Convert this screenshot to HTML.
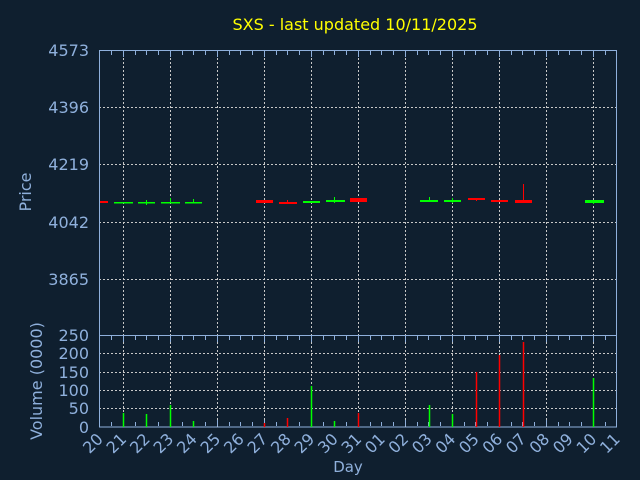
<!DOCTYPE html>
<html><head><meta charset="utf-8"><style>
html,body{margin:0;padding:0;background:#0f1f2f;}
svg{display:block;font-family:"DejaVu Sans","Liberation Sans",sans-serif;}
</style></head><body>
<svg width="640" height="480" xmlns="http://www.w3.org/2000/svg">
<rect width="640" height="480" fill="#0f1f2f"/>
<text x="355" y="30" fill="#ffff00" font-size="16" text-anchor="middle">SXS - last updated 10/11/2025</text>
<g stroke="#c8c8c8" stroke-width="1" stroke-dasharray="2,2">
<line x1="123.5" y1="50" x2="123.5" y2="427"/><line x1="170.5" y1="50" x2="170.5" y2="427"/>
<line x1="217.5" y1="50" x2="217.5" y2="427"/><line x1="264.5" y1="50" x2="264.5" y2="427"/>
<line x1="311.5" y1="50" x2="311.5" y2="427"/><line x1="358.5" y1="50" x2="358.5" y2="427"/>
<line x1="405.5" y1="50" x2="405.5" y2="427"/><line x1="452.5" y1="50" x2="452.5" y2="427"/>
<line x1="499.5" y1="50" x2="499.5" y2="427"/><line x1="546.5" y1="50" x2="546.5" y2="427"/>
<line x1="593.5" y1="50" x2="593.5" y2="427"/>
<line x1="99" y1="107.5" x2="617" y2="107.5"/><line x1="99" y1="164.5" x2="617" y2="164.5"/>
<line x1="99" y1="222.5" x2="617" y2="222.5"/><line x1="99" y1="279.5" x2="617" y2="279.5"/>
<line x1="99" y1="353.5" x2="617" y2="353.5"/><line x1="99" y1="372.5" x2="617" y2="372.5"/>
<line x1="99" y1="390.5" x2="617" y2="390.5"/><line x1="99" y1="408.5" x2="617" y2="408.5"/>
</g>
<g stroke="#8fb0dc" stroke-width="1" fill="none">
<rect x="99.5" y="50.5" width="517" height="376.5"/>
<line x1="99" y1="335.5" x2="617" y2="335.5"/>
<path id="tk" d="M111.5 51v4M123.5 51v6M135.5 51v4M146.5 51v4M158.5 51v4M170.5 51v6M182.5 51v4M193.5 51v4M205.5 51v4M217.5 51v6M229.5 51v4M240.5 51v4M252.5 51v4M264.5 51v6M276.5 51v4M287.5 51v4M299.5 51v4M311.5 51v6M323.5 51v4M334.5 51v4M346.5 51v4M358.5 51v6M370.5 51v4M381.5 51v4M393.5 51v4M405.5 51v6M417.5 51v4M428.5 51v4M440.5 51v4M452.5 51v6M464.5 51v4M475.5 51v4M487.5 51v4M499.5 51v6M511.5 51v4M522.5 51v4M534.5 51v4M546.5 51v6M558.5 51v4M569.5 51v4M581.5 51v4M593.5 51v6M605.5 51v4"/>
<use href="#tk" y="285"/>
<use href="#tk" transform="translate(0,477) scale(1,-1)"/>
</g>
<g fill="#8fb0dc" font-size="16" text-anchor="end">
<text x="89" y="56">4573</text><text x="89" y="113">4396</text><text x="89" y="170">4219</text>
<text x="89" y="228">4042</text><text x="89" y="285">3865</text>
<text x="89" y="341">250</text><text x="89" y="359">200</text><text x="89" y="378">150</text>
<text x="89" y="396">100</text><text x="89" y="414">50</text><text x="89" y="433">0</text>
</g>
<text transform="translate(31,192) rotate(-90)" fill="#8fb0dc" font-size="16" text-anchor="middle">Price</text>
<text transform="translate(42,381) rotate(-90)" fill="#8fb0dc" font-size="16" text-anchor="middle">Volume (0000)</text>
<text x="348" y="472" fill="#8fb0dc" font-size="15" text-anchor="middle">Day</text>
<g fill="#8fb0dc" font-size="16" text-anchor="end">
<text transform="translate(104,440) rotate(-45)">20</text>
<text transform="translate(127.5,440) rotate(-45)">21</text>
<text transform="translate(151,440) rotate(-45)">22</text>
<text transform="translate(174.5,440) rotate(-45)">23</text>
<text transform="translate(198,440) rotate(-45)">24</text>
<text transform="translate(221.5,440) rotate(-45)">25</text>
<text transform="translate(245,440) rotate(-45)">26</text>
<text transform="translate(268.5,440) rotate(-45)">27</text>
<text transform="translate(292,440) rotate(-45)">28</text>
<text transform="translate(315.5,440) rotate(-45)">29</text>
<text transform="translate(339,440) rotate(-45)">30</text>
<text transform="translate(362.5,440) rotate(-45)">31</text>
<text transform="translate(386,440) rotate(-45)">01</text>
<text transform="translate(409.5,440) rotate(-45)">02</text>
<text transform="translate(433,440) rotate(-45)">03</text>
<text transform="translate(456.5,440) rotate(-45)">04</text>
<text transform="translate(480,440) rotate(-45)">05</text>
<text transform="translate(503.5,440) rotate(-45)">06</text>
<text transform="translate(527,440) rotate(-45)">07</text>
<text transform="translate(550.5,440) rotate(-45)">08</text>
<text transform="translate(574,440) rotate(-45)">09</text>
<text transform="translate(597.5,440) rotate(-45)">10</text>
<text transform="translate(621,440) rotate(-45)">11</text>
</g>
<g fill="#00ff00" stroke="#00ff00" stroke-width="1">
<rect x="114" y="202" width="19" height="1.5" stroke="none"/>
<rect x="138" y="202" width="17" height="1.5" stroke="none"/><line x1="146.5" y1="200" x2="146.5" y2="205"/>
<rect x="161" y="202" width="19" height="1.5" stroke="none"/><line x1="170.5" y1="198" x2="170.5" y2="203"/>
<rect x="185" y="202" width="17" height="1.5" stroke="none"/><line x1="193.5" y1="199" x2="193.5" y2="203"/>
<rect x="303" y="201" width="17" height="2" stroke="none"/>
<rect x="326" y="200" width="19" height="2" stroke="none"/><line x1="334.5" y1="197" x2="334.5" y2="203"/>
<rect x="420" y="200" width="18" height="2" stroke="none"/><line x1="429.5" y1="197" x2="429.5" y2="202"/>
<rect x="444" y="200" width="17" height="2" stroke="none"/><line x1="452.5" y1="198" x2="452.5" y2="203"/>
<rect x="585" y="200" width="19" height="3" stroke="none"/><line x1="593.5" y1="200" x2="593.5" y2="204"/>
</g>
<g fill="#ff0000" stroke="#ff0000" stroke-width="1">
<rect x="100" y="201" width="8" height="2" stroke="none"/>
<rect x="256" y="200" width="17" height="3" stroke="none"/>
<rect x="279" y="202" width="18" height="2" stroke="none"/><line x1="287.5" y1="200" x2="287.5" y2="203"/>
<rect x="350" y="198" width="17" height="4" stroke="none"/>
<rect x="468" y="198" width="17" height="2" stroke="none"/><line x1="476.5" y1="199" x2="476.5" y2="201"/>
<rect x="491" y="200" width="17" height="2" stroke="none"/>
<rect x="515" y="200" width="17" height="3" stroke="none"/><line x1="523.5" y1="184" x2="523.5" y2="201"/>
</g>
<g stroke-width="1.5">
<line x1="123.5" y1="413" x2="123.5" y2="427" stroke="#00ff00"/>
<line x1="146.5" y1="414" x2="146.5" y2="427" stroke="#00ff00"/>
<line x1="170.5" y1="405" x2="170.5" y2="427" stroke="#00ff00"/>
<line x1="193.5" y1="421" x2="193.5" y2="427" stroke="#00ff00"/>
<line x1="264.5" y1="423" x2="264.5" y2="427" stroke="#ff0000"/>
<line x1="287.5" y1="418" x2="287.5" y2="427" stroke="#ff0000"/>
<line x1="311.5" y1="386" x2="311.5" y2="427" stroke="#00ff00"/>
<line x1="334.5" y1="421" x2="334.5" y2="427" stroke="#00ff00"/>
<line x1="358.5" y1="413" x2="358.5" y2="427" stroke="#ff0000"/>
<line x1="429.5" y1="405" x2="429.5" y2="427" stroke="#00ff00"/>
<line x1="452.5" y1="414" x2="452.5" y2="427" stroke="#00ff00"/>
<line x1="476.5" y1="372" x2="476.5" y2="427" stroke="#ff0000"/>
<line x1="499.5" y1="355" x2="499.5" y2="427" stroke="#ff0000"/>
<line x1="523.5" y1="342" x2="523.5" y2="427" stroke="#ff0000"/>
<line x1="593.5" y1="378" x2="593.5" y2="427" stroke="#00ff00"/>
</g>
</svg>
</body></html>
